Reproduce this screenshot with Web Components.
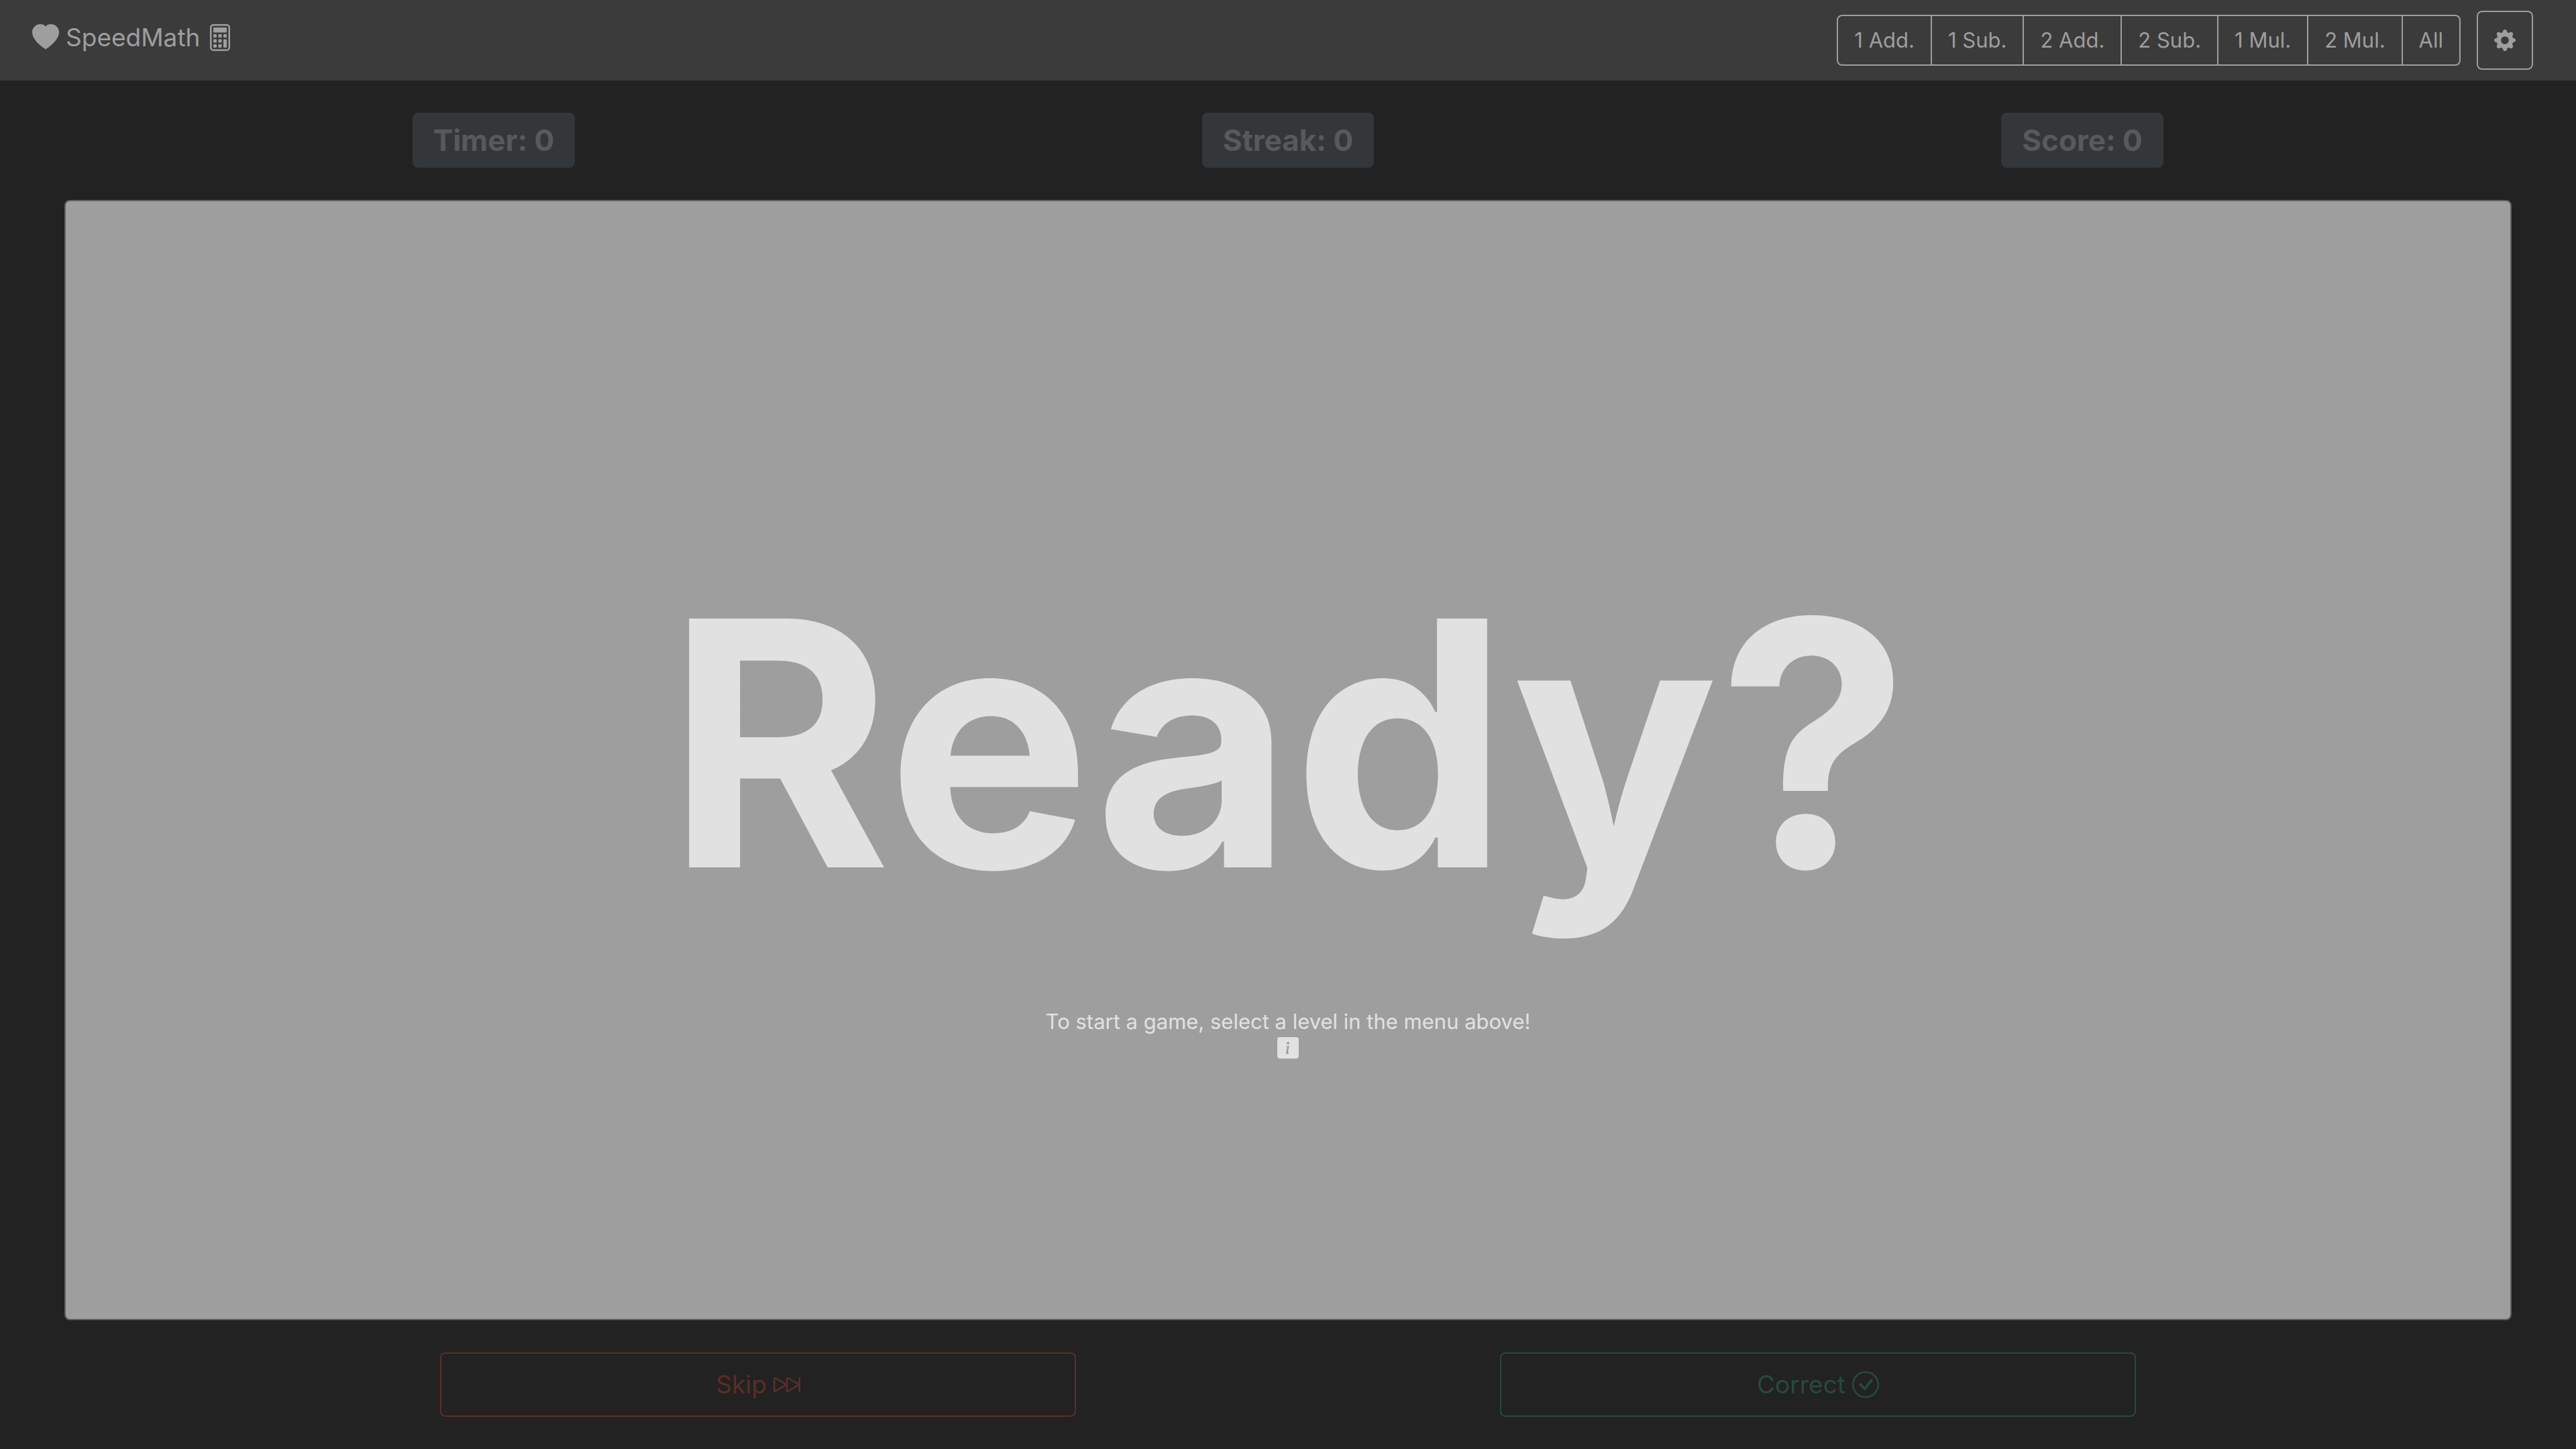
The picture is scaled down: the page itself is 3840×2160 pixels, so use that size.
<!DOCTYPE html>
<html lang="en">
<head>
<meta charset="utf-8">
<meta name="viewport" content="width=device-width, initial-scale=1">
<title>SpeedMath</title>
<style>
  :root {
    --page: #222222;
    --bar: #3b3b3b;
    --muted: #9e9e9e;
    --light: #e1e1e1;
    --badge: #343739;
    --badge-text: #595959;
    --danger: #5a2e29;
    --success: #274a3d;
    --radius: 8px;
    --text: 31px;
    --text-lg: 37px;
    --text-xl: 44px;
  }
  body {
    margin: 0;
    background: var(--page);
    color: var(--muted);
    font-family: Inter, "Liberation Sans", sans-serif;
    font-size: var(--text);
    line-height: 48px;
  }
</style>
</head>
<body>
<speed-math-app></speed-math-app>

<script>
const ICONS = {
  heart: '<path d="M8 1.314C12.438-3.248 23.534 4.735 8 15-7.534 4.736 3.562-3.248 8 1.314z"/>',
  calculator: '<path d="M12 1a1 1 0 0 1 1 1v12a1 1 0 0 1-1 1H4a1 1 0 0 1-1-1V2a1 1 0 0 1 1-1h8zM4 0a2 2 0 0 0-2 2v12a2 2 0 0 0 2 2h8a2 2 0 0 0 2-2V2a2 2 0 0 0-2-2H4z"/>' +
    '<rect x="4" y="2" width="8" height="3" rx=".5"/>' +
    '<rect x="4" y="6" width="2" height="2" rx=".5"/><rect x="7" y="6" width="2" height="2" rx=".5"/><rect x="10" y="6" width="2" height="2" rx=".5"/>' +
    '<rect x="4" y="9" width="2" height="2" rx=".5"/><rect x="7" y="9" width="2" height="2" rx=".5"/><rect x="10" y="9" width="2" height="5" rx=".5"/>' +
    '<rect x="4" y="12" width="2" height="2" rx=".5"/><rect x="7" y="12" width="2" height="2" rx=".5"/>',
  gear: '<path d="M9.405 1.05c-.413-1.4-2.397-1.4-2.81 0l-.1.34a1.464 1.464 0 0 1-2.105.872l-.31-.17c-1.283-.698-2.686.705-1.987 1.987l.169.311c.446.82.023 1.841-.872 2.105l-.34.1c-1.4.413-1.4 2.397 0 2.81l.34.1a1.464 1.464 0 0 1 .872 2.105l-.17.31c-.698 1.283.705 2.686 1.987 1.987l.311-.169a1.464 1.464 0 0 1 2.105.872l.1.34c.413 1.4 2.397 1.4 2.81 0l.1-.34a1.464 1.464 0 0 1 2.105-.872l.31.17c1.283.698 2.686-.705 1.987-1.987l-.169-.311a1.464 1.464 0 0 1 .872-2.105l.34-.1c1.4-.413 1.4-2.397 0-2.81l-.34-.1a1.464 1.464 0 0 1-.872-2.105l.17-.31c.698-1.283-.705-2.686-1.987-1.987l-.311.169a1.464 1.464 0 0 1-2.105-.872l-.1-.34zM8 10.93a2.929 2.929 0 1 1 0-5.86 2.929 2.929 0 0 1 0 5.858z"/>',
  info: '<path d="M0 2a2 2 0 0 1 2-2h12a2 2 0 0 1 2 2v12a2 2 0 0 1-2 2H2a2 2 0 0 1-2-2V2zm8.93 4.588-2.29.287-.082.38.45.083c.294.07.352.176.288.469l-.738 3.468c-.194.897.105 1.319.808 1.319.545 0 1.178-.252 1.465-.598l.088-.416c-.2.176-.492.246-.686.246-.275 0-.375-.193-.304-.533L8.93 6.588zM8 5.5a1 1 0 1 0 0-2 1 1 0 0 0 0 2z"/>',
  skip: '<path d="M15.5 3.5a.5.5 0 0 1 .5.5v8a.5.5 0 0 1-1 0V8.752l-6.267 3.636c-.52.302-1.233-.043-1.233-.696v-2.94l-6.267 3.636C.713 12.69 0 12.345 0 11.692V4.308c0-.653.713-.998 1.233-.696L7.5 7.248v-2.94c0-.653.713-.998 1.233-.696L15 7.248V4a.5.5 0 0 1 .5-.5zM1 4.633v6.734L6.804 8 1 4.633zm7.5 0v6.734L14.304 8 8.5 4.633z"/>',
  check: '<path d="M8 15A7 7 0 1 1 8 1a7 7 0 0 1 0 14zm0 1A8 8 0 1 0 8 0a8 8 0 0 0 0 16z"/>' +
    '<path d="M10.97 4.97a.235.235 0 0 0-.02.022L7.477 9.417 5.384 7.323a.75.75 0 0 0-1.06 1.06L6.97 11.03a.75.75 0 0 0 1.079-.02l3.992-4.99a.75.75 0 0 0-1.071-1.05z"/>'
};

function define(name, markup, setup) {
  customElements.define(name, class extends HTMLElement {
    constructor() {
      super();
      this.attachShadow({ mode: 'open' });
    }
    connectedCallback() {
      this.shadowRoot.innerHTML = markup;
      if (setup) setup(this, this.shadowRoot);
    }
  });
}

define('sm-icon', `
  <style>
    :host { display: block; flex: none; width: 32px; height: 32px; }
    :host([size="lg"]) { width: 40px; height: 40px; }
    svg { display: block; width: 100%; height: 100%; fill: currentColor; }
  </style>
  <svg viewBox="0 0 16 16" aria-hidden="true"></svg>`,
  (host, root) => { root.querySelector('svg').innerHTML = ICONS[host.getAttribute('name')]; });

define('level-button', `
  <style>
    :host { display: block; }
    :host(:not(:first-child)) { margin-left: -2px; }
    button {
      display: block; margin: 0; padding: 12px 24px;
      border: 2px solid var(--muted); background: none; color: inherit;
      font: inherit; cursor: pointer;
    }
    :host(:first-child) button { border-radius: var(--radius) 0 0 var(--radius); }
    :host(:last-child) button { border-radius: 0 var(--radius) var(--radius) 0; }
  </style>
  <button type="button"><slot></slot></button>`);

define('top-bar', `
  <style>
    :host { display: block; background: var(--bar); }
    nav {
      display: flex; align-items: center; justify-content: space-between;
      padding: 16px 64px 16px 48px;
    }
    .brand {
      display: flex; align-items: center; align-self: flex-start; gap: 10px;
      height: 80px; color: inherit; text-decoration: none; font-size: var(--text-lg);
    }
    .tools, .levels { display: flex; align-items: center; }
    .tools { gap: 24px; }
    .settings {
      display: grid; place-items: center; margin: 0; padding: 26px 24px;
      border: 2px solid var(--muted); border-radius: var(--radius);
      background: none; color: inherit; cursor: pointer;
    }
  </style>
  <nav>
    <a class="brand" href="#"><sm-icon name="heart" size="lg"></sm-icon><slot name="brand"></slot><sm-icon name="calculator" size="lg"></sm-icon></a>
    <div class="tools">
      <div class="levels" role="group" aria-label="Level">
        <level-button>1 Add.</level-button>
        <level-button>1 Sub.</level-button>
        <level-button>2 Add.</level-button>
        <level-button>2 Sub.</level-button>
        <level-button>1 Mul.</level-button>
        <level-button>2 Mul.</level-button>
        <level-button>All</level-button>
      </div>
      <button class="settings" type="button" aria-label="Settings"><sm-icon name="gear"></sm-icon></button>
    </div>
  </nav>`);

define('stat-badge', `
  <style>
    :host {
      display: block; padding: 17px 31px; border-radius: var(--radius);
      background: var(--badge); color: var(--badge-text);
      font-size: var(--text-xl); font-weight: 700; line-height: 48px; white-space: nowrap;
    }
  </style>
  <slot></slot>`);

define('game-board', `
  <style>
    :host {
      display: flex; flex-direction: column; align-items: center; justify-content: center;
      flex: 1; box-sizing: border-box; padding-top: 96px;
      border: 2px solid #606060; border-radius: var(--radius);
      background: var(--muted); color: var(--light); text-align: center;
    }
    h1 { margin: 0 0 68px; font-size: 510px; font-weight: 700; line-height: 648px; }
    p { margin: 0; line-height: 46px; }
  </style>
  <h1><slot name="title"></slot></h1>
  <p><slot name="hint"></slot></p>
  <sm-icon name="info"></sm-icon>`);

define('action-button', `
  <style>
    :host { display: block; width: 60%; color: var(--danger); }
    :host([tone="success"]) { color: var(--success); }
    button {
      display: flex; align-items: center; justify-content: center; gap: 10px;
      width: 100%; margin: 0; padding: 16px 32px;
      border: 2px solid currentColor; border-radius: var(--radius);
      background: none; color: inherit; cursor: pointer;
      font: inherit; font-size: var(--text-lg); line-height: 60px;
    }
  </style>
  <button type="button"><slot></slot><slot name="icon"></slot></button>`);

define('speed-math-app', `
  <style>
    :host { display: flex; flex-direction: column; min-height: 100vh; }
    main { display: flex; flex: 1; flex-direction: column; gap: 48px; padding: 48px 96px; }
    .stats, .actions { display: grid; justify-items: center; }
    .stats { grid-template-columns: repeat(3, 1fr); padding: 0 48px; }
    .actions { grid-template-columns: repeat(2, 1fr); padding: 0 244px; }
  </style>
  <top-bar><span slot="brand">SpeedMath</span></top-bar>
  <main>
    <div class="stats">
      <stat-badge>Timer: 0</stat-badge>
      <stat-badge>Streak: 0</stat-badge>
      <stat-badge>Score: 0</stat-badge>
    </div>
    <game-board>
      <span slot="title">Ready?</span>
      <span slot="hint">To start a game, select a level in the menu above!</span>
    </game-board>
    <div class="actions">
      <action-button tone="danger">Skip<sm-icon slot="icon" name="skip" size="lg"></sm-icon></action-button>
      <action-button tone="success">Correct<sm-icon slot="icon" name="check" size="lg"></sm-icon></action-button>
    </div>
  </main>`);
</script>
</body>
</html>
